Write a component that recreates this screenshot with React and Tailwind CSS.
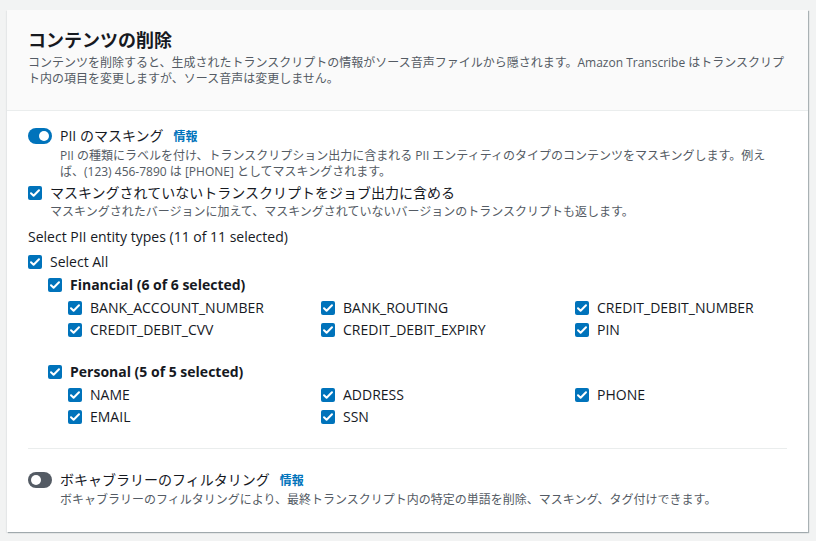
import React from 'react';

const FONT = { fontFamily: '"Open Sans", "Noto Sans CJK JP", sans-serif' };

const Check = ({ className = '' }) => (
    <span className={`flex h-[14px] w-[14px] shrink-0 items-center justify-center rounded-[2px] bg-[#0073bb] ${className}`}>
        <svg viewBox="0 0 14 14" className="h-[14px] w-[14px]">
            <path d="M3 7.2l2.6 2.6L11 4.2" fill="none" stroke="white" strokeWidth="2" strokeLinecap="round" strokeLinejoin="round" />
        </svg>
    </span>
);

const Toggle = ({ on }) => (
    <span className={`relative mt-[3px] flex h-[16px] w-[24px] shrink-0 items-center rounded-full ${on ? 'bg-[#0073bb]' : 'bg-[#545b64]'}`}>
        <span className={`absolute top-[3px] h-[10px] w-[10px] rounded-full bg-white ${on ? 'left-[11px]' : 'left-[3px]'}`} />
    </span>
);

const Item = ({ label }) => (
    <div className="flex items-center gap-2 text-sm leading-[22px] text-[#16191f]">
        <Check />
        <span>{label}</span>
    </div>
);

const Group = ({ title, items }) => (
    <div>
        <div className="flex items-center gap-2 text-sm font-bold leading-[22px] text-[#16191f]">
            <Check />
            <span>{title}</span>
        </div>
        <div className="mt-[1px] grid grid-cols-[253px_254px_1fr] pl-[20px]">
            {items.map((i) => <Item key={i} label={i} />)}
        </div>
    </div>
);

export default function App() {
    return (
        <div style={FONT} className="min-h-[541px] bg-[#f2f3f3] px-[7px] pt-[10px] text-[#16191f]">
            <div className="w-[801px] bg-white shadow-[1px_1px_1px_0_rgba(0,28,36,0.3),-1px_1px_1px_0_rgba(0,28,36,0.05)]">
                {/* Header */}
                <div className="border-b border-[#eaeded] bg-[#fafafa] px-[21px] pb-[23px] pt-[18px]">
                    <h2 className="text-[18px] font-bold leading-[24px]">コンテンツの削除</h2>
                    <p className="mt-[3px] text-[12px] leading-[16px] text-[#545b64]">
                        コンテンツを削除すると、生成されたトランスクリプトの情報がソース音声ファイルから隠されます。Amazon Transcribe はトランスクリプト内の項目を変更しますが、ソース音声は変更しません。
                    </p>
                </div>

                {/* Body */}
                <div className="px-[21px] pb-[24px] pt-[14px]">
                    <div className="flex gap-2">
                        <Toggle on />
                        <div>
                            <div className="flex items-baseline gap-[10px] text-sm leading-[22px]">
                                <span>PII のマスキング</span>
                                <span className="text-[12px] font-bold text-[#0073bb]">情報</span>
                            </div>
                            <p className="text-[12px] leading-[16px] text-[#545b64]">
                                PII の種類にラベルを付け、トランスクリプション出力に含まれる PII エンティティのタイプのコンテンツをマスキングします。例えば、(123) 456-7890 は [PHONE] としてマスキングされます。
                            </p>
                        </div>
                    </div>

                    <div className="mt-[2px] flex gap-2">
                        <Check className="mt-[4px]" />
                        <div>
                            <div className="text-sm leading-[22px]">マスキングされていないトランスクリプトをジョブ出力に含める</div>
                            <p className="text-[12px] leading-[16px] text-[#545b64]">
                                マスキングされたバージョンに加えて、マスキングされていないバージョンのトランスクリプトも返します。
                            </p>
                        </div>
                    </div>

                    <div className="mt-[6px] text-sm leading-[22px]">Select PII entity types (11 of 11 selected)</div>

                    <div className="mt-[3px] flex items-center gap-2 text-sm leading-[22px]">
                        <Check />
                        <span>Select All</span>
                    </div>

                    <div className="mt-[1px] pl-[20px]">
                        <Group
                            title="Financial (6 of 6 selected)"
                            items={['BANK_ACCOUNT_NUMBER', 'BANK_ROUTING', 'CREDIT_DEBIT_NUMBER', 'CREDIT_DEBIT_CVV', 'CREDIT_DEBIT_EXPIRY', 'PIN']}
                        />
                        <div className="mt-[20px]">
                            <Group
                                title="Personal (5 of 5 selected)"
                                items={['NAME', 'ADDRESS', 'PHONE', 'EMAIL', 'SSN']}
                            />
                        </div>
                    </div>

                    <div className="mt-[20px] border-t border-[#eaeded]" />

                    <div className="mt-[20px] flex gap-2">
                        <Toggle />
                        <div>
                            <div className="flex items-baseline gap-[10px] text-sm leading-[22px]">
                                <span>ボキャブラリーのフィルタリング</span>
                                <span className="text-[12px] font-bold text-[#0073bb]">情報</span>
                            </div>
                            <p className="text-[12px] leading-[16px] text-[#545b64]">
                                ボキャブラリーのフィルタリングにより、最終トランスクリプト内の特定の単語を削除、マスキング、タグ付けできます。
                            </p>
                        </div>
                    </div>
                </div>
            </div>
        </div>
    );
}
